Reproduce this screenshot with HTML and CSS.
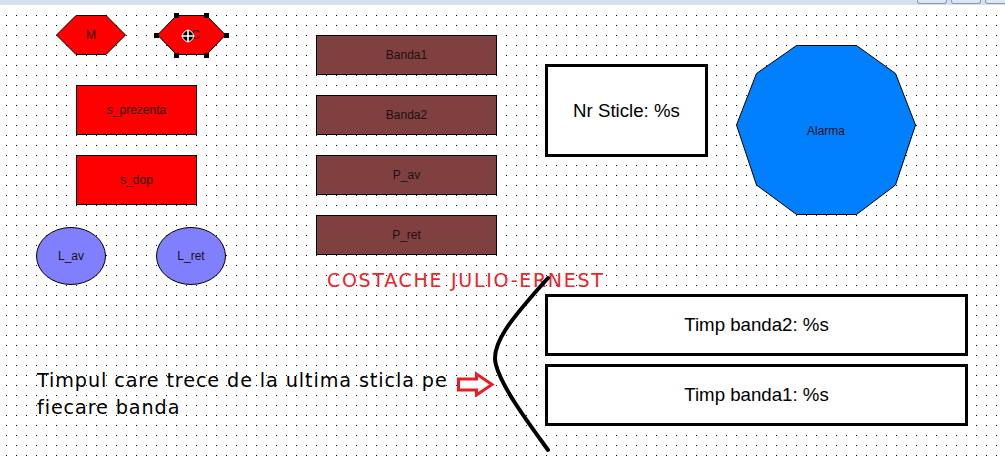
FILE: index.html
```html
<!DOCTYPE html>
<html>
<head>
<meta charset="utf-8">
<link rel="stylesheet" href="styles.css">
</head>
<body>
<div class="screen">
  <div class="topbar">
    <div class="tab"></div><div class="tab"></div><div class="tab tab-last"></div>
  </div>
  <div class="canvas">
    <svg class="grid" width="1005" height="447" xmlns="http://www.w3.org/2000/svg">
      <defs>
        <pattern id="dots" width="10" height="10" patternUnits="userSpaceOnUse">
          <rect x="6" y="5" width="1" height="1" fill="#000"/>
        </pattern>
      </defs>
      <rect width="1005" height="447" fill="url(#dots)"/>
    </svg>

    <div class="node hex-m">
      <svg viewBox="0 0 70 40"><polygon points="0.5,20 20,0.5 50,0.5 69.5,20 50,39.5 20,39.5" fill="#ff0000" stroke="#000" stroke-width="1"/></svg>
      <span>M</span>
    </div>
    <div class="node hex-sc">
      <svg viewBox="0 0 69 40"><polygon points="0.5,20 19.5,0.5 49.5,0.5 68.5,20 49.5,39.5 19.5,39.5" fill="#ff0000" stroke="#000" stroke-width="1"/></svg>
      <span>SC</span>
      <i class="handle h1"></i><i class="handle h2"></i><i class="handle h3"></i>
      <i class="handle h4"></i><i class="handle h5"></i><i class="handle h6"></i>
      <svg class="cursor" viewBox="0 0 16 16"><circle cx="8" cy="8" r="5.5" fill="#000" stroke="#fff" stroke-width="1"/><path d="M8 1.5V14.5M1.5 8H14.5" stroke="#fff" stroke-width="1.6"/></svg>
    </div>

    <div class="node box-red s-prez"><span>s_prezenta</span></div>
    <div class="node box-red s-dop"><span>s_dop</span></div>

    <div class="node ell l-av">
      <svg viewBox="0 0 70 58"><ellipse cx="35" cy="29" rx="34.5" ry="28.5" fill="#8080ff" stroke="#000" stroke-width="1"/></svg>
      <span>L_av</span>
    </div>
    <div class="node ell l-ret">
      <svg viewBox="0 0 70 58"><ellipse cx="35" cy="29" rx="34.5" ry="28.5" fill="#8080ff" stroke="#000" stroke-width="1"/></svg>
      <span>L_ret</span>
    </div>

    <div class="node box-brown b1"><span>Banda1</span></div>
    <div class="node box-brown b2"><span>Banda2</span></div>
    <div class="node box-brown b3"><span>P_av</span></div>
    <div class="node box-brown b4"><span>P_ret</span></div>

    <div class="node box-white nr"><span>Nr Sticle: %s</span></div>

    <div class="node deca">
      <svg viewBox="0 0 180 170"><polygon points="60.5,0.5 120.5,0.5 159.5,28.5 179.5,80 159.5,140 120.5,169.5 60.5,169.5 20.5,140 0.5,80 20.5,28.5" fill="#0080ff" stroke="#000" stroke-width="1"/></svg>
      <span class="alarm">Alarma</span>
    </div>

    <div class="name">COSTACHE JULIO-ERNEST</div>

    <div class="node box-white t2"><span>Timp banda2: %s</span></div>
    <div class="node box-white t1"><span>Timp banda1: %s</span></div>

    <div class="note">Timpul care trece de la ultima sticla pe<br>fiecare banda</div>

    <svg class="arrow" viewBox="0 0 42 26"><polygon points="3.5,8 21.5,8 21.5,3 37,13.5 21.5,24 21.5,19 3.5,19" fill="#fff" stroke="#ed1c24" stroke-width="3" stroke-linejoin="miter"/></svg>

    <svg class="curve" viewBox="0 0 80 190"><path d="M68,8 C30,50 10,75 16,95 C22,118 50,155 68,180" fill="none" stroke="#000" stroke-width="4" stroke-linecap="round"/></svg>
  </div>
</div>
</body>
</html>
```
FILE: styles.css
```css
html, body {
  margin: 0;
  padding: 0;
  background: #fff;
  overflow: hidden;
}
.screen {
  width: 1005px;
  height: 457px;
  display: flex;
  flex-direction: column;
}
.topbar {
  height: 5px;
  background: #d4e1ef;
  display: flex;
  justify-content: flex-end;
  gap: 4px;
  box-sizing: border-box;
}
.tab {
  width: 30px;
  height: 4px;
  box-sizing: border-box;
  border: 1px solid #8c98b4;
  border-top: none;
  border-radius: 0 0 3px 3px;
  background: #dde6f2;
}
.tab-last {
  margin-right: -10px;
}
.canvas {
  position: relative;
  flex: 1;
}
.grid {
  position: absolute;
  left: 0;
  top: 5px;
}
.node {
  position: absolute;
  display: flex;
  align-items: center;
  justify-content: center;
  box-sizing: border-box;
  font-family: "Liberation Sans", Arial, sans-serif;
  font-size: 12px;
  color: #1e1010;
}
.node > svg {
  position: absolute;
  left: 0;
  top: 0;
  width: 100%;
  height: 100%;
  overflow: visible;
}
.node > span {
  position: relative;
}
/* canvas positions: canvas origin is y=5 of the screen */
.hex-m { left: 56px; top: 10px; width: 70px; height: 40px; }
.hex-sc { left: 157px; top: 10px; width: 69px; height: 40px; }
.handle {
  position: absolute;
  width: 5px;
  height: 5px;
  background: #000;
}
.h1 { left: 17px; top: -2px; }
.h2 { left: 47px; top: -2px; }
.h3 { left: -3px; top: 18px; }
.h4 { left: 67px; top: 18px; }
.h5 { left: 17px; top: 38px; }
.h6 { left: 47px; top: 38px; }
.node > svg.cursor {
  left: 23px;
  top: 13px;
  width: 16px;
  height: 16px;
}
.box-red {
  background: #ff0000;
  border: 1px solid #000;
  width: 121px;
  height: 50px;
  left: 76px;
}
.s-prez { top: 80px; }
.s-dop { top: 150px; }
.ell { top: 222px; width: 70px; height: 58px; }
.l-av { left: 36px; }
.l-ret { left: 156px; }
.box-brown {
  background: #804040;
  border: 1px solid #000;
  width: 181px;
  height: 40px;
  left: 316px;
}
.b1 { top: 30px; }
.b2 { top: 90px; }
.b3 { top: 150px; }
.b4 { top: 210px; }
.box-white {
  background: #fff;
  border: 3px solid #000;
  font-size: 18.67px;
  color: #000;
}
.nr { left: 545px; top: 59px; width: 163px; height: 93px; }
.t2 { left: 545px; top: 289px; width: 423px; height: 62px; }
.t1 { left: 545px; top: 359px; width: 423px; height: 62px; }
.deca { left: 736px; top: 40px; width: 180px; height: 170px; }
.alarm { top: 1px; }
.name {
  position: absolute;
  left: 327px;
  top: 266px;
  font-family: "DejaVu Sans", Verdana, sans-serif;
  font-size: 19px;
  line-height: 1;
  letter-spacing: 1.7px;
  color: #f2222a;
  white-space: nowrap;
}
.note {
  position: absolute;
  left: 37px;
  top: 362px;
  font-family: "DejaVu Sans", Verdana, sans-serif;
  font-size: 19.2px;
  line-height: 27px;
  letter-spacing: 0.9px;
  color: #000;
  white-space: nowrap;
}
.arrow {
  position: absolute;
  left: 455px;
  top: 366px;
  width: 42px;
  height: 26px;
}
.curve {
  position: absolute;
  left: 480px;
  top: 265px;
  width: 80px;
  height: 190px;
}
```
